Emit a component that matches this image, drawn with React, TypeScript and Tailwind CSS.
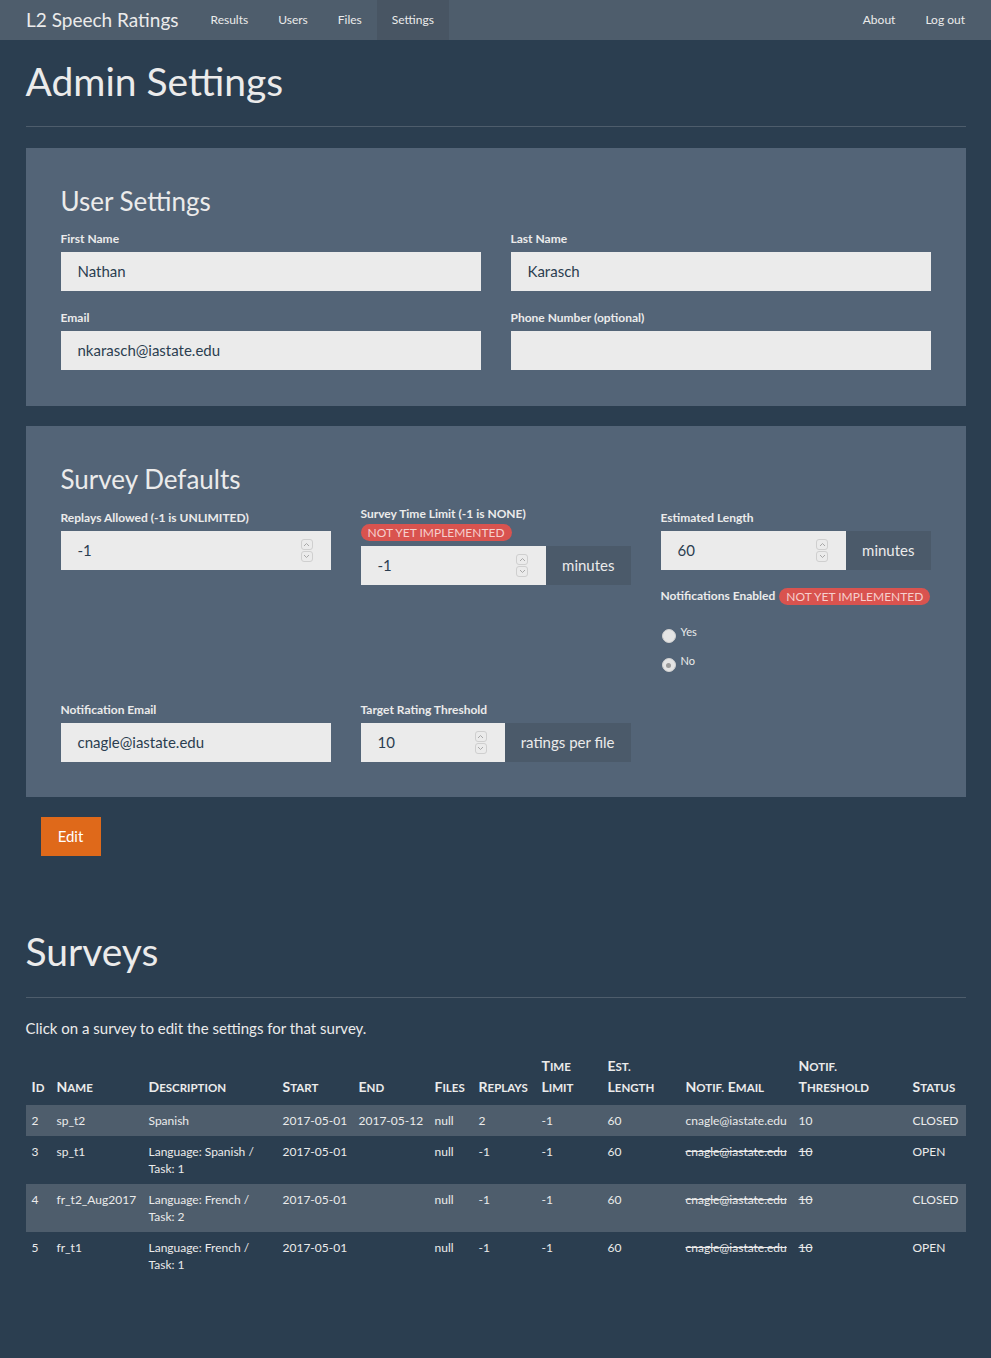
import React from 'react';

const Spinner: React.FC = () => (
  <span className="flex flex-col gap-[1px] w-[12px] mr-[18px]">
    <span className="h-[11px] border border-[#cfcfcf] rounded-[3px] flex items-center justify-center">
      <svg width="7" height="5" viewBox="0 0 7 5" fill="none" stroke="#a8a8a8" strokeWidth="1">
        <path d="M1 4 L3.5 1.5 L6 4" />
      </svg>
    </span>
    <span className="h-[11px] border border-[#cfcfcf] rounded-[3px] flex items-center justify-center">
      <svg width="7" height="5" viewBox="0 0 7 5" fill="none" stroke="#a8a8a8" strokeWidth="1">
        <path d="M1 1 L3.5 3.5 L6 1" />
      </svg>
    </span>
  </span>
);

const TextInput: React.FC<{ value?: string }> = ({ value }) => (
  <div className="h-[39px] bg-[#ebebeb] flex items-center pl-[17px] text-[15px] text-[#2b3e50]">
    {value}
  </div>
);

const NumberInput: React.FC<{ value: string; addon?: string }> = ({ value, addon }) => (
  <div className="flex h-[39px]">
    <div className="flex-1 bg-[#ebebeb] flex items-center justify-between pl-[17px] text-[15px] text-[#2b3e50]">
      <span>{value}</span>
      <Spinner />
    </div>
    {addon && (
      <div className="bg-[#4b5a6a] flex items-center px-4 text-[15px] text-[#ebebeb]">{addon}</div>
    )}
  </div>
);

const Label: React.FC<{ children: React.ReactNode; className?: string }> = ({ children, className }) => (
  <div className={`text-[12px] font-bold leading-[17px] text-[#ebebeb] ${className ?? 'mb-[5px]'}`}>{children}</div>
);

const Badge: React.FC = () => (
  <span className="inline-block bg-[#d9534f] text-[#f6cfcd] text-[12px] font-normal leading-[17px] px-[7px] rounded-full uppercase">
    Not yet implemented
  </span>
);

const Radio: React.FC<{ label: string; checked?: boolean }> = ({ label, checked }) => (
  <div className="flex items-start gap-[5px] h-[14px] ml-[1px]">
    <span className="w-[14px] h-[14px] rounded-full bg-[#e4e4e4] border border-[#d0d0d0] flex items-center justify-center mt-[1px]">
      {checked && <span className="w-[5px] h-[5px] rounded-full bg-[#9a9a9a]" />}
    </span>
    <span className="text-[11px] leading-[12px] -mt-[2px]">{label}</span>
  </div>
);

// small caps drawn with two sizes, like the theme's headings
const SmallCaps: React.FC<{ text: string }> = ({ text }) => (
  <>
    {text.split(' ').map((w, i) => (
      <React.Fragment key={i}>
        {i > 0 && ' '}
        <span className="whitespace-nowrap">
          <span className="text-[14px]">{w[0].toUpperCase()}</span>
          <span className="text-[11.5px] uppercase">{w.slice(1)}</span>
        </span>
      </React.Fragment>
    ))}
  </>
);

type Row = {
  id: string;
  name: string;
  desc: string;
  start: string;
  end: string;
  files: string;
  replays: string;
  limit: string;
  length: string;
  email: string;
  threshold: string;
  status: string;
  strike?: boolean;
};

const rows: Row[] = [
  { id: '2', name: 'sp_t2', desc: 'Spanish', start: '2017-05-01', end: '2017-05-12', files: 'null', replays: '2', limit: '-1', length: '60', email: 'cnagle@iastate.edu', threshold: '10', status: 'CLOSED' },
  { id: '3', name: 'sp_t1', desc: 'Language: Spanish / Task: 1', start: '2017-05-01', end: '', files: 'null', replays: '-1', limit: '-1', length: '60', email: 'cnagle@iastate.edu', threshold: '10', status: 'OPEN', strike: true },
  { id: '4', name: 'fr_t2_Aug2017', desc: 'Language: French / Task: 2', start: '2017-05-01', end: '', files: 'null', replays: '-1', limit: '-1', length: '60', email: 'cnagle@iastate.edu', threshold: '10', status: 'CLOSED', strike: true },
  { id: '5', name: 'fr_t1', desc: 'Language: French / Task: 1', start: '2017-05-01', end: '', files: 'null', replays: '-1', limit: '-1', length: '60', email: 'cnagle@iastate.edu', threshold: '10', status: 'OPEN', strike: true },
];

const headers: { label: string[]; w: number }[] = [
  { label: ['Id'], w: 25 },
  { label: ['Name'], w: 92 },
  { label: ['Description'], w: 134 },
  { label: ['Start'], w: 76 },
  { label: ['End'], w: 76 },
  { label: ['Files'], w: 44 },
  { label: ['Replays'], w: 63 },
  { label: ['Time', 'Limit'], w: 66 },
  { label: ['Est.', 'Length'], w: 78 },
  { label: ['Notif. Email'], w: 113 },
  { label: ['Notif.', 'Threshold'], w: 114 },
  { label: ['Status'], w: 59 },
];

const cell = 'align-top px-[6px] py-[7px] text-[12px] leading-[17px]';

const App: React.FC = () => {
  return (
    <div className="min-h-[1358px] bg-[#2b3e50] text-[#ebebeb] font-[family-name:Lato,sans-serif]">
      <nav className="h-10 bg-[#4e5d6c] flex items-stretch px-[26px]">
        <span className="flex items-center text-[19px] pr-[17px]">L2 Speech Ratings</span>
        {['Results', 'Users', 'Files', 'Settings'].map((l) => (
          <span
            key={l}
            className={`flex items-center px-[15px] text-[12px] ${l === 'Settings' ? 'bg-[#485563]' : ''}`}
          >
            {l}
          </span>
        ))}
        <div className="ml-auto flex items-stretch">
          <span className="flex items-center px-[15px] text-[12px]">About</span>
          <span className="flex items-center pl-[15px] text-[12px]">Log out</span>
        </div>
      </nav>

      <div className="w-[940px] mx-auto">
        <div className="pt-5 pb-[23px] border-b border-[#4e5d6c]">
          <h1 className="text-[39px] leading-[43px]">Admin Settings</h1>
        </div>

        {/* user settings */}
        <div className="mt-[21px] bg-[#536477] px-[35px] pt-[39px] pb-[36px]">
          <h3 className="text-[26px] leading-[29px] mb-[14px]">User Settings</h3>
          <div className="grid grid-cols-2 gap-x-[30px] gap-y-[18px]">
            <div>
              <Label>First Name</Label>
              <TextInput value="Nathan" />
            </div>
            <div>
              <Label>Last Name</Label>
              <TextInput value="Karasch" />
            </div>
            <div>
              <Label>Email</Label>
              <TextInput value="nkarasch@iastate.edu" />
            </div>
            <div>
              <Label>Phone Number (optional)</Label>
              <TextInput />
            </div>
          </div>
        </div>

        {/* survey defaults */}
        <div className="mt-5 bg-[#536477] px-[35px] pt-[39px] pb-[35px]">
          <h3 className="text-[26px] leading-[29px] mb-[15px]">Survey Defaults</h3>
          <div className="grid grid-cols-3 gap-x-[30px] items-start">
            <div>
              <Label>Replays Allowed (-1 is UNLIMITED)</Label>
              <NumberInput value="-1" />
            </div>
            <div className="-mt-[4px]">
              <Label className="mb-[5px]">
                Survey Time Limit (-1 is NONE)
                <div className="mt-[2px]">
                  <Badge />
                </div>
              </Label>
              <NumberInput value="-1" addon="minutes" />
            </div>
            <div>
              <Label>Estimated Length</Label>
              <NumberInput value="60" addon="minutes" />
              <div className="mt-[17px] flex items-center gap-[4px] text-[12px] font-bold">
                <span>Notifications Enabled</span>
                <Badge />
              </div>
              <div className="mt-[23px] flex flex-col gap-[15px]">
                <Radio label="Yes" />
                <Radio label="No" checked />
              </div>
            </div>
          </div>
          <div className="grid grid-cols-3 gap-x-[30px] mt-[30px]">
            <div>
              <Label>Notification Email</Label>
              <TextInput value="cnagle@iastate.edu" />
            </div>
            <div>
              <Label>Target Rating Threshold</Label>
              <NumberInput value="10" addon="ratings per file" />
            </div>
          </div>
        </div>

        <button className="mt-5 ml-[15px] h-[39px] w-[60px] bg-[#df691a] text-white text-[15px]">Edit</button>

        <div className="mt-[74px] pb-[24px] border-b border-[#4e5d6c]">
          <h1 className="text-[39px] leading-[43px]">Surveys</h1>
        </div>

        <p className="mt-[20px] text-[15px] leading-[21px] mb-[8px]">Click on a survey to edit the settings for that survey.</p>

        <table className="w-[940px] table-fixed border-collapse">
          <colgroup>
            {headers.map((h) => (
              <col key={h.label.join(' ')} style={{ width: h.w }} />
            ))}
          </colgroup>
          <thead>
            <tr>
              {headers.map((h) => (
                <th
                  key={h.label.join(' ')}
                  className="text-left align-bottom px-[6px] pt-[8px] pb-[8px] leading-[19px] font-bold whitespace-nowrap"
                >
                  {h.label.map((l, k) => (
                    <div key={k}>
                      <SmallCaps text={l} />
                    </div>
                  ))}
                </th>
              ))}
            </tr>
          </thead>
          <tbody>
            {rows.map((r, i) => (
              <tr key={r.id} className={i % 2 === 0 ? 'bg-[#4e5d6c]' : ''}>
                <td className={cell}>{r.id}</td>
                <td className={cell}>{r.name}</td>
                <td className={cell}>{r.desc}</td>
                <td className={`${cell} whitespace-nowrap`}>{r.start}</td>
                <td className={`${cell} whitespace-nowrap`}>{r.end}</td>
                <td className={cell}>{r.files}</td>
                <td className={cell}>{r.replays}</td>
                <td className={cell}>{r.limit}</td>
                <td className={cell}>{r.length}</td>
                <td className={`${cell} whitespace-nowrap ${r.strike ? 'line-through' : ''}`}>{r.email}</td>
                <td className={`${cell} ${r.strike ? 'line-through' : ''}`}>{r.threshold}</td>
                <td className={cell}>{r.status}</td>
              </tr>
            ))}
          </tbody>
        </table>
      </div>
    </div>
  );
};

export default App;
